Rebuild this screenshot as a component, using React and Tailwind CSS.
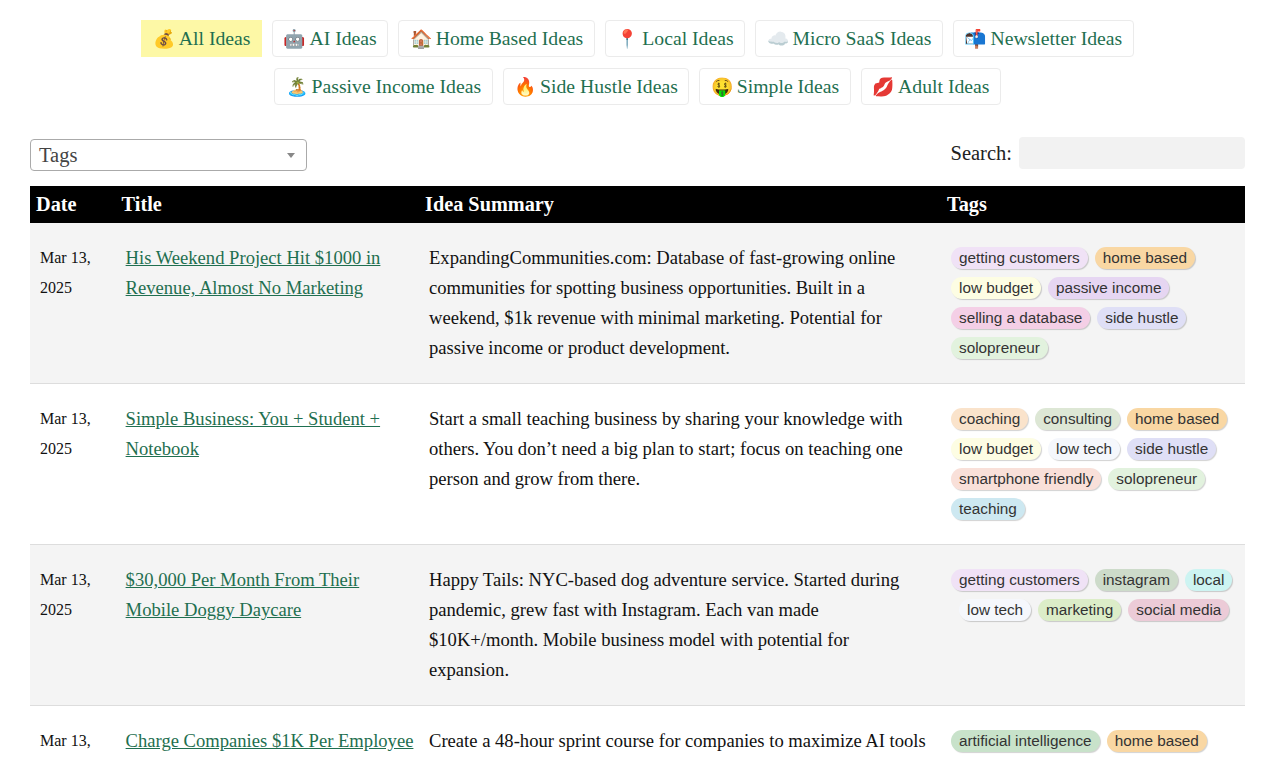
const categories = [
  [
    { emoji: "💰", label: "All Ideas", active: true },
    { emoji: "🤖", label: "AI Ideas" },
    { emoji: "🏠", label: "Home Based Ideas" },
    { emoji: "📍", label: "Local Ideas" },
    { emoji: "☁️", label: "Micro SaaS Ideas" },
    { emoji: "📬", label: "Newsletter Ideas" },
  ],
  [
    { emoji: "🏝️", label: "Passive Income Ideas" },
    { emoji: "🔥", label: "Side Hustle Ideas" },
    { emoji: "🤑", label: "Simple Ideas" },
    { emoji: "💋", label: "Adult Ideas" },
  ],
];

const tagColors = {
  "getting customers": "bg-[#f0e2f6]",
  "home based": "bg-[#f9d7a3]",
  "low budget": "bg-[#fdfde3]",
  "passive income": "bg-[#e6d6f2]",
  "selling a database": "bg-[#f4cfe6]",
  "side hustle": "bg-[#dfdff6]",
  solopreneur: "bg-[#e2f2de]",
  coaching: "bg-[#fae3cb]",
  consulting: "bg-[#dde7d5]",
  "low tech": "bg-[#f5f7fc]",
  "smartphone friendly": "bg-[#f9e0d9]",
  teaching: "bg-[#cde8f1]",
  instagram: "bg-[#cddbca]",
  local: "bg-[#cdf4f2]",
  marketing: "bg-[#dcedc8]",
  "social media": "bg-[#eccbd7]",
  "artificial intelligence": "bg-[#c8e2ca]",
};

const rows = [
  {
    title: "His Weekend Project Hit $1000 in Revenue, Almost No Marketing",
    summary:
      "ExpandingCommunities.com: Database of fast-growing online communities for spotting business opportunities. Built in a weekend, $1k revenue with minimal marketing. Potential for passive income or product development.",
    tags: ["getting customers", "home based", "low budget", "passive income", "selling a database", "side hustle", "solopreneur"],
  },
  {
    title: "Simple Business: You + Student + Notebook",
    summary:
      "Start a small teaching business by sharing your knowledge with others. You don’t need a big plan to start; focus on teaching one person and grow from there.",
    tags: ["coaching", "consulting", "home based", "low budget", "low tech", "side hustle", "smartphone friendly", "solopreneur", "teaching"],
  },
  {
    title: "$30,000 Per Month From Their Mobile Doggy Daycare",
    summary:
      "Happy Tails: NYC-based dog adventure service. Started during pandemic, grew fast with Instagram. Each van made $10K+/month. Mobile business model with potential for expansion.",
    tags: ["getting customers", "instagram", "local", "low tech", "marketing", "social media"],
    indented: "low tech",
  },
  {
    title: "Charge Companies $1K Per Employee",
    summary: "Create a 48-hour sprint course for companies to maximize AI tools",
    tags: ["artificial intelligence", "home based"],
  },
];

const columns = "grid grid-cols-[85.6px_303.4px_522px_304px]";

function Tag({ name, indented }) {
  return (
    <span
      className={`inline-block h-[22px] mr-[7px] px-2 rounded-[11px] align-middle font-['Liberation_Sans',Arial,sans-serif] text-[15.3px] leading-[22px] text-[#333] shadow-[1px_1px_1px_rgba(0,0,0,0.18)] ${tagColors[name]} ${indented ? "ml-2" : ""}`}
    >
      {name}
    </span>
  );
}

export default function App() {
  return (
    <div className="h-[760px] overflow-hidden bg-white px-[30px] pt-5 font-['Liberation_Serif',Georgia,serif] text-[18.6px] text-[#111]">
      <div className="w-[1215px] flex flex-col items-center gap-[11px] text-[19.7px]">
        {categories.map((group, i) => (
          <div key={i} className="flex justify-center gap-2.5">
            {group.map((c) => (
              <a
                key={c.label}
                className={`h-[37px] px-[10.5px] flex items-center gap-[4px] rounded border text-[#1f6f50] ${
                  c.active ? "bg-[#fdf8a6] border-[#fdf8a6] rounded-none" : "bg-white border-[#ebebeb]"
                }`}
              >
                <span className="text-[18px] leading-none">{c.emoji}</span>
                <span className="pt-px">{c.label}</span>
              </a>
            ))}
          </div>
        ))}
      </div>

      <div className="w-[1215px] mt-[32px] flex items-start justify-between h-[34px] text-[20.5px]">
        <div className="w-[277px] h-8 mt-[2px] px-2 flex items-center justify-between rounded border border-[#aaa] text-[#444]">
          <span>Tags</span>
          <span className="mr-[3px] border-x-[4px] border-t-[5px] border-x-transparent border-t-[#888]" />
        </div>
        <label className="flex items-center gap-[7px] text-[#222]">
          Search:
          <input className="w-[226px] h-8 bg-[#f2f2f2] rounded-sm" />
        </label>
      </div>

      <div className="w-[1215px] mt-[15px]">
        <div className={`${columns} h-[37px] items-center bg-black pl-[6px] text-[20.3px] font-bold text-white`}>
          <div>Date</div>
          <div>Title</div>
          <div>Idea Summary</div>
          <div>Tags</div>
        </div>
        {rows.map((row, i) => (
          <div key={row.title} className={`${columns} h-[161px] py-5 border-b border-[#ddd] leading-[30px] ${i % 2 === 0 ? "bg-[#f4f4f4]" : "bg-white"}`}>
            <div className="px-2.5 text-[16px]">Mar 13, 2025</div>
            <div className="pl-2.5 pr-[3px]">
              <a className="text-[#1f6f50] underline">{row.title}</a>
            </div>
            <div className="px-2.5">{row.summary}</div>
            <div className="pl-2.5 -mt-0.5">
              {row.tags.map((t) => (
                <Tag key={t} name={t} indented={row.indented === t} />
              ))}
            </div>
          </div>
        ))}
      </div>
    </div>
  );
}
